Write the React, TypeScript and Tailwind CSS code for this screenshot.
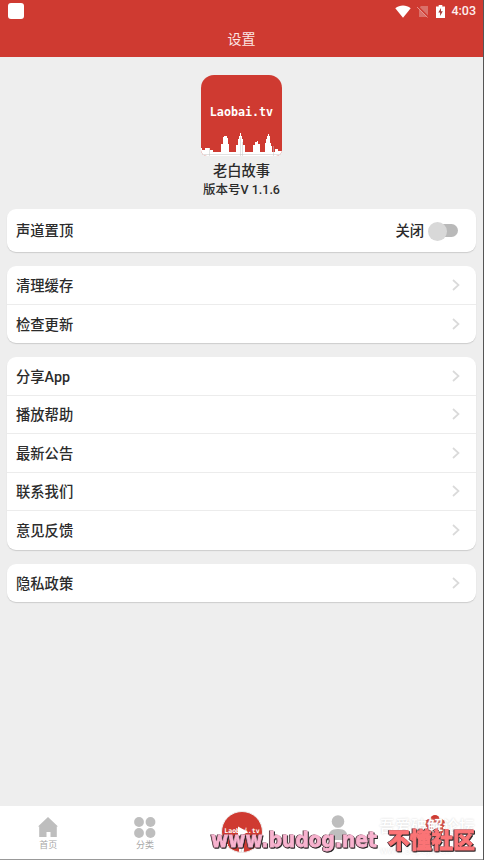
import React from 'react';

const GROUPS = [
  ['清理缓存', '检查更新'],
  ['分享App', '播放帮助', '最新公告', '联系我们', '意见反馈'],
  ['隐私政策'],
];

const StatusBar: React.FC = () => (
  <div className="h-[22px] flex items-center justify-between pl-2 pr-[7px]">
    <div className="w-4 h-4 bg-white rounded-[3px]" />
    <div className="flex items-center text-white">
      <svg width="16" height="13" viewBox="0 0 16 13" fill="currentColor">
        <path d="M0.3 3.2C4.8-.4 11.2-.4 15.7 3.2L8 12.7z" />
      </svg>
      <svg className="ml-[6px]" width="12" height="13" viewBox="0 0 12 13">
        <path d="M4 1h7v11H2V3z" fill="#da706a" />
        <path d="M1 1.500l11 11" stroke="#cf3a31" strokeWidth="1.500" />
        <path d="M0 2l10.500 10.500" stroke="#e5938e" strokeWidth="1" />
      </svg>
      <svg className="ml-[7px]" width="9" height="13" viewBox="0 0 9 13">
        <path d="M2.7 0h3.6v1.5H9V13H0V1.5h2.7z" fill="#fff" />
        <path d="M5 3L2.3 7.6h1.8V11l2.7-4.7H5z" fill="#a83a34" />
      </svg>
      <span className="ml-[6px] font-[Roboto] font-medium text-[12.5px] leading-4 text-[#fdeeee]">4:03</span>
    </div>
  </div>
);

const Skyline: React.FC<{ className?: string }> = ({ className }) => (
  <svg className={className} width="81" height="24" viewBox="0 0 81 24">
    <path
      d="M0 16h1v2h3v-2h5v2h3v2h8v-8h2V5h1V4h3v2h1v6h1v8h7v-7h2V7h1V4h1V1h1v3h1v3h1v6h2v7h8v-7h2v-3h2V9h1v3h2v8h5v-9h1V7h1V4h1V2h1v2h1v7h1v3h1v6h3v-3h3v2h4v5H0z"
      fill="#fff"
    />
    <path d="M8.500 16v8M39.500 5v19M41.500 10v14M72.500 14v10M0 22.500h81" stroke="#c4c4c4" strokeWidth=".5" />
  </svg>
);

const Chevron: React.FC = () => (
  <svg width="8" height="12" viewBox="0 0 8 12" fill="none" stroke="#dadada" strokeWidth="1.7">
    <path d="M1 1l5.500 5L1 11" />
  </svg>
);

const TabBar: React.FC = () => (
  <nav className="relative h-[54px] shrink-0 bg-white border-b border-[#999] grid grid-cols-5 text-[#bebebe] text-[9px] leading-[11px]">
    <div className="flex flex-col items-center pt-[11px]">
      <svg width="20" height="20" viewBox="0 0 20 20" fill="currentColor">
        <path d="M10 0l10 9.500h-1.200V20H12.500v-5h-4v5H1.200V9.500H0z" />
      </svg>
      <span className="mt-[3px] text-[#a8a8a8]">首页</span>
    </div>
    <div className="flex flex-col items-center pt-[11px]">
      <svg width="22" height="21" viewBox="0 0 22 21" fill="currentColor">
        <circle cx="5" cy="5" r="4.900" />
        <circle cx="16.500" cy="5" r="4.900" />
        <circle cx="5" cy="16" r="4.900" />
        <circle cx="16.500" cy="16" r="4.900" />
      </svg>
      <span className="mt-[2px] text-[#a8a8a8]">分类</span>
    </div>
    <div className="flex justify-center pt-[5px] pl-[1px]">
      <div className="relative w-[42px] h-[42px] shrink-0 rounded-full bg-[#cf3a31] border border-[#eee] overflow-hidden flex justify-center">
        <span className="mt-[14px] text-white font-['DejaVu_Sans_Mono'] font-bold text-[6.5px]">Laobai.tv</span>
        <svg className="absolute left-[16px] top-[14px]" width="10" height="12" viewBox="0 0 11 12" fill="#fff">
          <path d="M0 0l11 6-11 6z" />
        </svg>
        <Skyline className="absolute -left-[20px] top-[28px]" />
      </div>
    </div>
    <div className="flex justify-center pt-[9px]">
      <svg width="20" height="25" viewBox="0 0 20 25" fill="currentColor">
        <circle cx="10" cy="6.500" r="6.300" />
        <path d="M0 25c0-8 3-11 10-11s10 3 10 11z" />
      </svg>
    </div>
    <div className="flex justify-center pt-[9px]">
      <svg width="20" height="20" viewBox="0 0 20 20" fill="#cf3a31">
        <circle cx="10" cy="4.500" r="4.500" />
        <circle cx="4.500" cy="8.500" r="4.500" />
        <circle cx="15.500" cy="8.500" r="4.500" />
        <circle cx="6" cy="15" r="4.500" />
        <circle cx="14" cy="15" r="4.500" />
        <circle cx="10" cy="10.500" r="3" fill="#fff" />
      </svg>
    </div>

    {/* stamps over the tabs */}
    <div className="absolute left-[379px] top-[11px] whitespace-nowrap text-[16px] leading-5 text-white font-medium [text-shadow:0_0_2px_#d0d0d0]">
      吾爱破解论坛
    </div>
    <div className="absolute left-[380px] top-[37px] text-[10px] leading-4 text-white [text-shadow:0_0_2px_#ddd]">
      www.52pojie.cn
    </div>
    <svg
      className="absolute left-[205px] top-[16px] [filter:drop-shadow(1px_1px_0_#222)_drop-shadow(-0.5px_0_0_#5a3a44)]"
      width="279"
      height="36"
      viewBox="0 0 279 36"
      strokeLinejoin="miter"
      strokeWidth=".8"
    >
      <text x="6" y="25" textLength="166" lengthAdjust="spacingAndGlyphs" fontFamily="DejaVu Sans, sans-serif" fontWeight="700" fontSize="22" fill="#f8b3cf" stroke="#f8b3cf">
        www.budog.net
      </text>
      <text x="183" y="26" textLength="87" lengthAdjust="spacingAndGlyphs" fontFamily="Noto Sans CJK SC, sans-serif" fontWeight="900" fontSize="22" fill="#fb7476" stroke="#fb7476">
        不懂社区
      </text>
    </svg>
  </nav>
);

const App: React.FC = () => {
  return (
    <div className="w-[484px] h-[860px] flex flex-col overflow-hidden bg-[#eeeeee] border-r border-[#555] font-['Roboto','Noto_Sans_CJK_SC',sans-serif] text-[#2b2b2b]">
      <header className="h-[57px] shrink-0 bg-[#cf3a31]">
        <StatusBar />
        <h1 className="text-center text-[14px] leading-[35px] text-[#fbe6e4]">设置</h1>
      </header>

      <main className="flex-1 px-[7px]">
        <div className="flex flex-col items-center pt-[18px] h-[152px]">
          <div className="w-[81px] h-[81px] rounded-t-[13px] rounded-b-[6px] bg-[#cf3a31] overflow-hidden flex flex-col items-center justify-between">
            <span className="mt-[27px] font-['DejaVu_Sans_Mono'] font-bold text-[11.7px] leading-5 text-white">Laobai.tv</span>
            <Skyline />
          </div>
          <div className="mt-[5px] text-[14.3px] leading-5 font-medium">老白故事</div>
          <div className="text-[12.5px] leading-[18px] font-medium">版本号V 1.1.6</div>
        </div>

        <div className="h-[43px] mb-[14px] pl-[9px] pr-[18px] flex items-center justify-between bg-white rounded-[9px] shadow-[0_1px_1px_#cccccc] text-[14.3px] font-medium">
          <span className="pt-[2px]">声道置顶</span>
          <div className="flex items-center">
            <span className="pt-[2px]">关闭</span>
            <div className="relative ml-[5px] w-[29px] h-[20px] flex items-center justify-end">
              <div className="w-[22px] h-[13px] rounded-full bg-[#b9b9b9]" />
              <div className="absolute left-[-1px] top-[1px] w-[19px] h-[19px] rounded-full bg-[#d8d8d8]" />
            </div>
          </div>
        </div>

        {GROUPS.map((rows) => (
          <div key={rows[0]} className="mb-[14px] bg-white rounded-[9px] shadow-[0_1px_1px_#cccccc] divide-y divide-[#ececec]">
            {rows.map((label) => (
              <div key={label} className="h-[38.5px] pl-[9px] pr-[16px] flex items-center justify-between text-[14.3px]">
                <span className="pt-[3px] font-medium">{label}</span>
                <Chevron />
              </div>
            ))}
          </div>
        ))}
      </main>

      <TabBar />
    </div>
  );
};

export default App;
